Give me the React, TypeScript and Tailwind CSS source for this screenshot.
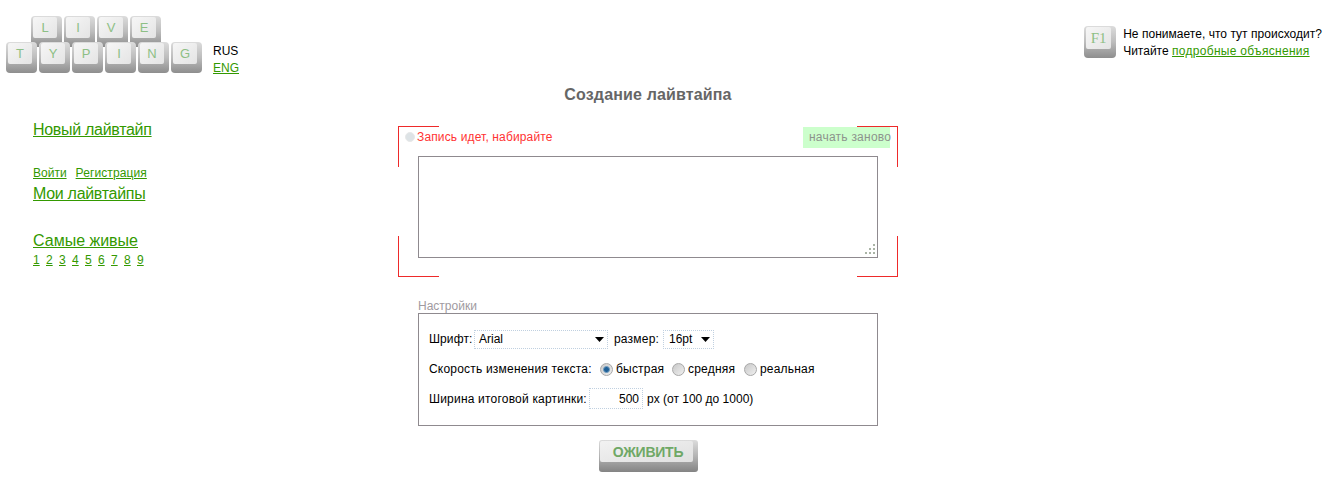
const link = 'text-[#339900] underline'

function Key({ letter, large = false }: { letter: string; large?: boolean }) {
  return (
    <div className={`${large ? 'w-[32px] h-[32px] mr-[7px]' : 'w-[31px] h-[31px]'} shrink-0 rounded-[4px] pl-[2px] pr-[5px] pt-[1px] pb-[9px] bg-gradient-to-b from-[#dcdcdc] via-[#bdbdbd] to-[#8e8e8e]`}>
      <div className={`w-full h-full rounded-[2px] bg-gradient-to-br from-[#f6f6f6] to-[#e4e4e4] flex items-center justify-center leading-none text-[#8dbf85] ${large ? "text-[15px] font-['Liberation_Serif',serif]" : 'text-[13px]'}`}>
        {letter}
      </div>
    </div>
  )
}

function Radio({ checked = false }: { checked?: boolean }) {
  return (
    <span className="w-[13px] h-[13px] rounded-full border border-[#a8a8a8] bg-gradient-to-br from-[#c8c8c8] to-[#f0f0f0] flex items-center justify-center shrink-0">
      {checked && <span className="w-[7px] h-[7px] rounded-full bg-[#1f5f96] border border-[#6f9cc0]" />}
    </span>
  )
}

function Arrow() {
  return (
    <svg width="9" height="5" viewBox="0 0 9 5" className="shrink-0">
      <path d="M0 0h9L4.500 5z" fill="#000" />
    </svg>
  )
}

function Corner({ className }: { className: string }) {
  return <div className={`absolute w-[41px] h-[41px] border-[#ee2a2a] ${className}`} />
}

export default function App() {
  return (
    <div className="h-[495px] overflow-hidden bg-white text-[12px] leading-[14px] text-black font-['Liberation_Sans',Arial,sans-serif]">
      <header className="h-[85px] pt-[16px] flex justify-between">
        <div className="flex">
          <div className="pl-[6px] w-[213px]">
            <div className="flex gap-[2px] pl-[25px]">
              {['L', 'I', 'V', 'E'].map(l => <Key key={l} letter={l} />)}
            </div>
            <div className="flex gap-[2px] -mt-[5px]">
              {['T', 'Y', 'P', 'I', 'N', 'G'].map((l, i) => <Key key={i} letter={l} />)}
            </div>
          </div>
          <div className="pt-[27px] leading-[17px]">
            <div>RUS</div>
            <a href="#" className={link}>ENG</a>
          </div>
        </div>
        <div className="flex pt-[10px] pr-[16px]">
          <Key letter="F1" large />
          <div className="leading-[17px]">
            <div className="tracking-[0.03px]">Не понимаете, что тут происходит?</div>
            <div>Читайте <a href="#" className={`${link} tracking-[0.3px]`}>подробные объяснения</a></div>
          </div>
        </div>
      </header>

      <div className="flex">
        <nav className="w-[398px] pl-[33px] shrink-0">
          <a href="#" className={`${link} block w-fit mt-[35px] text-[16px] leading-[20px] tracking-[-0.3px]`}>Новый лайвтайп</a>
          <div className="flex gap-[9px] mt-[26px]">
            <a href="#" className={link}>Войти</a>
            <a href="#" className={`${link} tracking-[0.1px]`}>Регистрация</a>
          </div>
          <a href="#" className={`${link} block w-fit mt-[4px] text-[16px] leading-[20px] tracking-[-0.3px]`}>Мои лайвтайпы</a>
          <a href="#" className={`${link} block w-fit mt-[27px] text-[16px] leading-[20px]`}>Самые живые</a>
          <div className="flex mt-[2px]">
            {[1, 2, 3, 4, 5, 6, 7, 8, 9].map(n => (
              <a key={n} href="#" className={`${link} w-[13px]`}><span>{n}</span></a>
            ))}
          </div>
        </nav>

        <main className="w-[500px] shrink-0">
          <h1 className="text-center text-[16px] leading-[20px] font-bold text-[#666666] tracking-[0.15px]">Создание лайвтайпа</h1>

          <div className="relative mt-[21px] h-[151px]">
            <Corner className="top-0 left-0 border-t border-l" />
            <Corner className="top-0 right-0 border-t border-r" />
            <Corner className="bottom-0 left-0 border-b border-l" />
            <Corner className="bottom-0 right-0 border-b border-r" />

            <div className="relative flex justify-between items-start pt-[1px] pl-[7px] pr-[8px]">
              <div className="flex items-center gap-[2px] h-[21px] pb-[2px] text-[#ff3333]">
                <span className="w-[10px] h-[10px] rounded-full bg-[#dde3e6] border border-[#e8e8e8]" />
                <span className="tracking-[0.14px]">Запись идет, набирайте</span>
              </div>
              <div className="h-[21px] w-[87px] bg-[#ccffcc] text-[#8c948c] pl-[6px] pb-[2px] flex items-center whitespace-nowrap tracking-[0.23px]">начать заново</div>
            </div>

            <div className="relative ml-[20px] mt-[8px] w-[460px] h-[102px]">
              <textarea className="block w-full h-full resize-none border border-[#8f8a8f] bg-white outline-none" />
              <svg width="11" height="11" viewBox="0 0 11 11" className="absolute right-[2px] bottom-[3px]">
                <path d="M8 0h2v2H8zM4 4h2v2H4zM8 4h2v2H8zM0 8h2v2H0zM4 8h2v2H4zM8 8h2v2H8z" fill="#aab4a6" />
              </svg>
            </div>
          </div>

          <div className="ml-[20px] mt-[22px] h-[14px] text-[#a09aa0]">Настройки</div>
          <div className="ml-[20px] w-[460px] h-[113px] border border-[#8f8a8f] pl-[10px] pt-[15px]">
            <div className="flex items-center h-[20px]">
              <span className="w-[45px] tracking-[0.1px]">Шрифт:</span>
              <div className="w-[134px] h-[19px] border border-dotted border-[#c0d0e0] flex items-center justify-between pl-[4px] pr-[3px]">
                <span>Arial</span>
                <Arrow />
              </div>
              <span className="ml-[6px] w-[49px] tracking-[0.2px]">размер:</span>
              <div className="w-[51px] h-[19px] border border-dotted border-[#c0d0e0] flex items-center justify-between pl-[5px] pr-[3px]">
                <span>16pt</span>
                <Arrow />
              </div>
            </div>

            <div className="flex items-center h-[20px] mt-[10px] tracking-[0.2px]">
              <span className="w-[171px]">Скорость изменения текста:</span>
              <span className="w-[72px] flex items-center gap-[3px]"><Radio checked />быстрая</span>
              <span className="w-[72px] flex items-center gap-[3px]"><Radio />средняя</span>
              <span className="flex items-center gap-[3px]"><Radio />реальная</span>
            </div>

            <div className="flex items-center h-[21px] mt-[9px]">
              <span className="w-[160px] tracking-[0.2px]">Ширина итоговой картинки:</span>
              <input
                defaultValue="500"
                className="w-[54px] h-[21px] border border-dotted border-[#c0d0e0] text-right pr-[3px] outline-none"
              />
              <span className="ml-[4px]">px (от 100 до 1000)</span>
            </div>
          </div>

          <div className="flex justify-center mt-[14px]">
            <button className="w-[99px] h-[32px] rounded-[3px] pl-[1px] pr-[5px] pt-[1px] pb-[10px] bg-gradient-to-b from-[#dcdcdc] via-[#b4b4b4] to-[#848484]">
              <span className="w-full h-full rounded-[2px] bg-gradient-to-br from-[#f2f2f2] to-[#e0e0e0] flex items-center justify-center pl-[4px] text-[14px] font-bold tracking-[-0.25px] text-[#6fa866]">
                ОЖИВИТЬ
              </span>
            </button>
          </div>
        </main>
      </div>
    </div>
  )
}
